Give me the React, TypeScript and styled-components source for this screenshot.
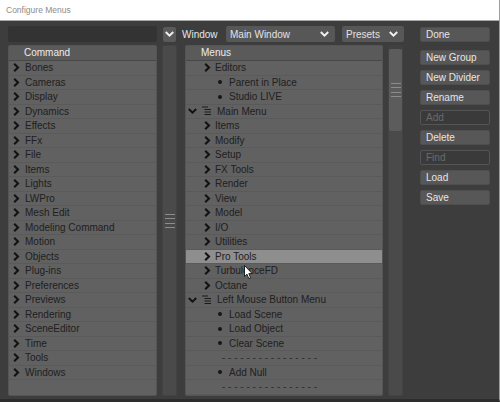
import styled, { createGlobalStyle } from "styled-components";

const GlobalStyle = createGlobalStyle`
  html, body {
    margin: 0;
    padding: 0;
    background: #3d3d3d;
  }
  body {
    font-family: "Liberation Sans", Arial, sans-serif;
  }
  * {
    box-sizing: border-box;
  }
`;

type MenuRow =
  | { kind: "group"; label: string }
  | { kind: "open"; label: string }
  | { kind: "item"; label: string }
  | { kind: "sep" };

const commands = [
  "Bones",
  "Cameras",
  "Display",
  "Dynamics",
  "Effects",
  "FFx",
  "File",
  "Items",
  "Lights",
  "LWPro",
  "Mesh Edit",
  "Modeling Command",
  "Motion",
  "Objects",
  "Plug-ins",
  "Preferences",
  "Previews",
  "Rendering",
  "SceneEditor",
  "Time",
  "Tools",
  "Windows",
];

const menus: MenuRow[] = [
  { kind: "group", label: "Editors" },
  { kind: "item", label: "Parent in Place" },
  { kind: "item", label: "Studio LIVE" },
  { kind: "open", label: "Main Menu" },
  { kind: "group", label: "Items" },
  { kind: "group", label: "Modify" },
  { kind: "group", label: "Setup" },
  { kind: "group", label: "FX Tools" },
  { kind: "group", label: "Render" },
  { kind: "group", label: "View" },
  { kind: "group", label: "Model" },
  { kind: "group", label: "I/O" },
  { kind: "group", label: "Utilities" },
  { kind: "group", label: "Pro Tools" },
  { kind: "group", label: "TurbulenceFD" },
  { kind: "group", label: "Octane" },
  { kind: "open", label: "Left Mouse Button Menu" },
  { kind: "item", label: "Load Scene" },
  { kind: "item", label: "Load Object" },
  { kind: "item", label: "Clear Scene" },
  { kind: "sep" },
  { kind: "item", label: "Add Null" },
  { kind: "sep" },
];

const buttons = [
  { text: "New Group", disabled: false },
  { text: "New Divider", disabled: false },
  { text: "Rename", disabled: false },
  { text: "Add", disabled: true },
  { text: "Delete", disabled: false },
  { text: "Find", disabled: true },
  { text: "Load", disabled: false },
  { text: "Save", disabled: false },
];

const ChevronRight = () => (
  <svg width="7" height="9" viewBox="0 0 7 9">
    <path d="M1.2 0.8 L5 4.5 L1.2 8.2" stroke="#121212" strokeWidth="2.1" fill="none" />
  </svg>
);

const ChevronDown = ({ color = "#121212" }: { color?: string }) => (
  <svg width="9" height="6" viewBox="0 0 9 6">
    <path d="M0.8 1 L4.5 4.6 L8.2 1" stroke={color} strokeWidth="2" fill="none" />
  </svg>
);

const MenuIcon = () => (
  <svg width="10" height="10" viewBox="0 0 10 10">
    <g stroke="#1a1a1a" strokeWidth="1">
      <line x1="0" y1="1" x2="6" y2="1" />
      <line x1="2.5" y1="3.5" x2="9" y2="3.5" />
      <line x1="2.5" y1="6" x2="9" y2="6" />
      <line x1="2.5" y1="8.5" x2="9" y2="8.5" />
    </g>
  </svg>
);

const App = () => {
  return (
    <>
      <GlobalStyle />
      <Window>
        <TitleBar>Configure Menus</TitleBar>
        <Body>
          <LeftArea>
            <Toolbar>
              <SearchField />
              <MiniDrop>
                <ChevronDown color="#f0f0f0" />
              </MiniDrop>
              <ToolLabel>Window</ToolLabel>
              <Select $width={109}>
                <span>Main Window</span>
                <ChevronDown color="#f0f0f0" />
              </Select>
              <Select $width={62} style={{ marginLeft: 7 }}>
                <span>Presets</span>
                <ChevronDown color="#f0f0f0" />
              </Select>
            </Toolbar>
            <Panels>
              <ListPanel $width={149}>
                <ListHeader>Command</ListHeader>
                {commands.map((c) => (
                  <Row key={c} $indent={4}>
                    <IconBox $w={12}>
                      <ChevronRight />
                    </IconBox>
                    {c}
                  </Row>
                ))}
              </ListPanel>
              <ScrollTrack $left={5} $right={8}>
                <Grip />
              </ScrollTrack>
              <ListPanel $width={198}>
                <ListHeader>Menus</ListHeader>
                {menus.map((m, i) => {
                  if (m.kind === "sep") {
                    return (
                      <Row key={i} $indent={36}>
                        <Dashes>- - - - - - - - - - - - - - - -</Dashes>
                      </Row>
                    );
                  }
                  if (m.kind === "open") {
                    return (
                      <Row key={i} $indent={2}>
                        <IconBox $w={14}>
                          <ChevronDown />
                        </IconBox>
                        <IconBox $w={15}>
                          <MenuIcon />
                        </IconBox>
                        {m.label}
                      </Row>
                    );
                  }
                  if (m.kind === "item") {
                    return (
                      <Row key={i} $indent={32}>
                        <IconBox $w={11}>
                          <Bullet />
                        </IconBox>
                        {m.label}
                      </Row>
                    );
                  }
                  return (
                    <Row key={i} $indent={18} $active={m.label === "Pro Tools"}>
                      <IconBox $w={11}>
                        <ChevronRight />
                      </IconBox>
                      {m.label}
                    </Row>
                  );
                })}
              </ListPanel>
              <ScrollTrack $left={5} $right={0} $top>
                <Thumb>
                  <Grip />
                </Thumb>
              </ScrollTrack>
            </Panels>
          </LeftArea>
          <ButtonColumn>
            <Button style={{ marginBottom: 3 }}>Done</Button>
            {buttons.map((b) => (
              <Button key={b.text} $disabled={b.disabled}>
                {b.text}
              </Button>
            ))}
          </ButtonColumn>
        </Body>
        <Cursor width="10" height="15" viewBox="0 0 10 15">
          <path
            d="M0.5 0.5 L0.5 11.5 L3 9.2 L4.8 13.6 L6.6 12.8 L4.8 8.6 L8.2 8.6 Z"
            fill="#ffffff"
            stroke="#111"
            strokeWidth="0.9"
          />
        </Cursor>
      </Window>
    </>
  );
};

const Window = styled.div`
  position: relative;
  width: 500px;
  height: 402px;
  display: flex;
  flex-direction: column;
  background: #3d3d3d;
  border-right: 1px solid #9c9c9c;
  border-bottom: 3px solid #2d2d2d;
  overflow: hidden;
`;

const TitleBar = styled.div`
  height: 21px;
  flex-shrink: 0;
  background: #ffffff;
  border-bottom: 1px solid #a8a8a8;
  padding-left: 6px;
  display: flex;
  align-items: center;
  font-size: 8.5px;
  color: #8c8c8c;
`;

const Body = styled.div`
  flex: 1;
  display: flex;
  gap: 16px;
  padding: 5px 0 0 8px;
`;

const LeftArea = styled.div`
  display: flex;
  flex-direction: column;
  gap: 3px;
`;

const Toolbar = styled.div`
  height: 16px;
  display: flex;
  align-items: center;
`;

const SearchField = styled.div`
  width: 149px;
  height: 16px;
  background: #333333;
  border-radius: 2px;
`;

const MiniDrop = styled.div`
  margin-left: 6px;
  width: 13px;
  height: 15px;
  background: #5a5a5a;
  border-radius: 2px;
  display: flex;
  align-items: center;
  justify-content: center;
`;

const ToolLabel = styled.div`
  margin-left: 6px;
  width: 44px;
  font-size: 10px;
  color: #e6e6e6;
`;

const Select = styled.div<{ $width: number }>`
  width: ${(p) => p.$width}px;
  height: 16px;
  background: #575757;
  border-radius: 2px;
  padding: 0 6px 0 4px;
  display: flex;
  align-items: center;
  justify-content: space-between;
  font-size: 10px;
  color: #e2e2e2;
`;

const Panels = styled.div`
  height: 351px;
  display: flex;
`;

const ListPanel = styled.div<{ $width: number }>`
  width: ${(p) => p.$width}px;
  background: #616161;
  border: 1px solid #555555;
  border-radius: 2px;
  display: flex;
  flex-direction: column;
  overflow: hidden;
`;

const ListHeader = styled.div`
  height: 15px;
  flex-shrink: 0;
  background: #5a5a5a;
  border-bottom: 1px solid #474747;
  padding-left: 15px;
  font-size: 10px;
  line-height: 14px;
  color: #ececec;
`;

const Row = styled.div<{ $indent: number; $active?: boolean }>`
  height: 14.5px;
  flex-shrink: 0;
  display: flex;
  align-items: center;
  padding-left: ${(p) => p.$indent}px;
  border-bottom: 1px solid #5a5a5a;
  background: ${(p) => (p.$active ? "#8e8e8e" : "transparent")};
  font-size: 10px;
  color: #202020;
  white-space: nowrap;
`;

const IconBox = styled.span<{ $w: number }>`
  width: ${(p) => p.$w}px;
  flex-shrink: 0;
  display: flex;
  align-items: center;
`;

const Bullet = styled.span`
  width: 4px;
  height: 4px;
  border-radius: 50%;
  background: #161616;
`;

const Dashes = styled.span`
  color: #2e2e2e;
`;

const ScrollTrack = styled.div<{ $left: number; $right: number; $top?: boolean }>`
  width: 15px;
  margin: 0 ${(p) => p.$right}px 0 ${(p) => p.$left}px;
  background: #4a4a4a;
  border: 1px solid #434343;
  border-top: ${(p) => (p.$top ? "4px solid #404040" : "1px solid #434343")};
  border-radius: 2px;
  display: flex;
  flex-direction: column;
  justify-content: ${(p) => (p.$top ? "flex-start" : "center")};
`;

const Thumb = styled.div`
  height: 82px;
  background: #5c5c5c;
  border-radius: 2px;
  display: flex;
  flex-direction: column;
  justify-content: center;
`;

const Grip = styled.div`
  margin: 0 auto;
  width: 10px;
  height: 14px;
  background: repeating-linear-gradient(
    to bottom,
    #8c8c8c 0px,
    #8c8c8c 1px,
    transparent 1px,
    transparent 4.4px
  );
`;

const ButtonColumn = styled.div`
  width: 70px;
  padding-top: 1px;
  display: flex;
  flex-direction: column;
  gap: 5px;
`;

const Button = styled.div<{ $disabled?: boolean }>`
  height: 15px;
  flex-shrink: 0;
  border-radius: 2px;
  padding-left: 5px;
  display: flex;
  align-items: center;
  font-size: 10px;
  background: ${(p) => (p.$disabled ? "#3a3a3a" : "#575757")};
  border: 1px solid ${(p) => (p.$disabled ? "#555555" : "#4e4e4e")};
  color: ${(p) => (p.$disabled ? "#6a6a6a" : "#e6e6e6")};
`;

const Cursor = styled.svg`
  position: absolute;
  left: 244px;
  top: 265px;
`;

export default App;
